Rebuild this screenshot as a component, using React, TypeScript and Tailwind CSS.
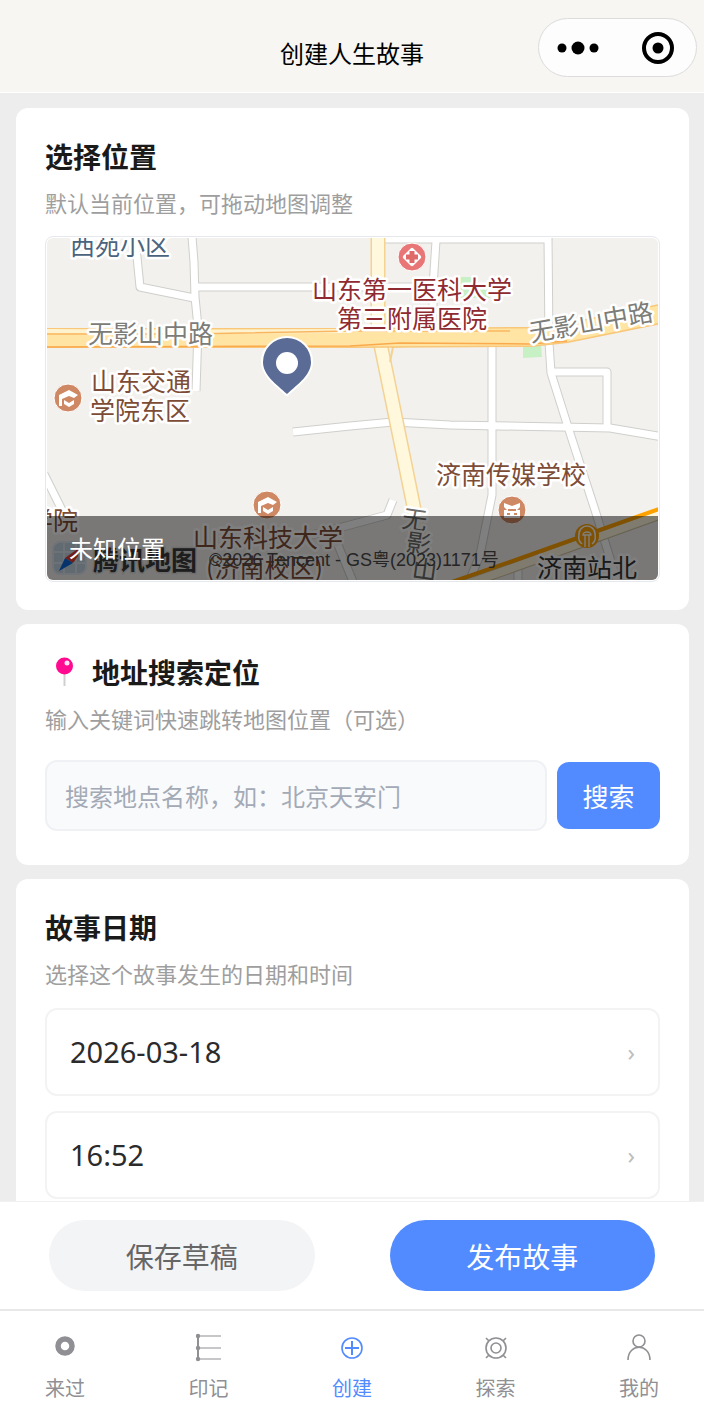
import { useState } from "react"
import type { ReactNode } from "react"

const ROADS = [
  "M134 237 L137 257 L140 287 L194 298",
  "M192 237 L194 262 L195 297 L198 327 L197 360 L196 391",
  "M196 287 L436 287",
  "M385 239 L549 239",
  "M436 241 L433 287 L433 330",
  "M548 237 L549 343 L551 373 L568 427 L595 510 L618 584",
  "M551 372 L607 372 L607 427",
  "M492 345 L492 495 L480 555 L468 584",
  "M293 432 L350 426 L393 422 L450 425 L610 428 L663 437",
  "M44 474 L62 510 L70 525",
  "M300 538 L350 525 L387 515 L393 500",
  "M338 545 L354 584",
  "M518 566 L518 584",
]

const BROWN = "#7d4c36"
const RED = "#8f2a30"

function Label({ x, y, fill, rotate = 0, children }: { x: number; y: number; fill: string; rotate?: number; children: ReactNode }) {
  return (
    <text
      x={x}
      y={y}
      fill={fill}
      fontSize="25"
      stroke="#fff"
      strokeWidth="5"
      strokeLinejoin="round"
      paintOrder="stroke"
      transform={`rotate(${rotate} ${x} ${y})`}
    >
      {children}
    </text>
  )
}

function SchoolPoi({ x, y }: { x: number; y: number }) {
  return (
    <g transform={`translate(${x} ${y})`}>
      <circle r="14" fill="#cf8864" stroke="#fff" strokeWidth="1" />
      <path d="M1 -8 L10 -3 L6 0 L1 -2 L-6 1 V8 H-9 V-3 Z" fill="#fff" />
      <path d="M-4 2 L1 5 L6 2 V6 L1 9 L-4 6 Z" fill="#fff" />
    </g>
  )
}

function MapCanvas() {
  return (
    <svg viewBox="47 238 612 342" preserveAspectRatio="xMinYMin slice" className="block h-full w-full" role="img" aria-label="地图">
      <rect x="40" y="230" width="640" height="370" fill="#f2f1ee" />

      {/* Parks */}
      <path d="M460 277 H476 V287 L490 291 V298 H460 Z M523 347 L541 345 L542 357 L523 358 Z" fill="#c7f0c4" />

      {/* Side streets */}
      <g fill="none" strokeLinejoin="round">
        {ROADS.map(d => <path key={d} d={d} stroke="#cfcfcc" strokeWidth="9" />)}
        {ROADS.map(d => <path key={d} d={d} stroke="#fff" strokeWidth="7" />)}
      </g>

      {/* Main roads */}
      <g fill="none" strokeLinejoin="round">
        <path d="M378 230 V332 L392 400 L413 503 L428 590" stroke="#f4d291" strokeWidth="15" />
        <path d="M378 230 V332 L392 400 L413 503 L428 590" stroke="#fff8dd" strokeWidth="12" />
        <path d="M390 362 L393 347 L430 344" stroke="#f4d291" strokeWidth="2" />
        <path d="M40 338 L350 338 L530 337 L567 333 L670 312" stroke="#f8c77a" strokeWidth="20" />
        <path d="M40 338 L350 338 L530 337 L567 333 L670 312" stroke="#ffe4a3" strokeWidth="17" />
        <path d="M40 331 L160 332 L350 331" stroke="#fff3cf" strokeWidth="4" />
        <path d="M40 334 L190 334 L350 331 L510 331" stroke="#f9b661" strokeWidth="1.5" />
        <path d="M40 347 L350 346 L400 343 L530 344 L567 341" stroke="#faa94c" strokeWidth="1.5" />
      </g>

      {/* Metro line */}
      <g fill="none">
        <path d="M461 586 L512 568 L670 511" stroke="#cfc3a0" strokeWidth="10" />
        <path d="M461 586 L512 568 L670 511" stroke="#fff6dc" strokeWidth="8" />
        <path d="M440 586 L510 562 L670 505" stroke="#ffa200" strokeWidth="4" />
        <circle cx="587" cy="536" r="12" fill="#ffa200" />
        <path d="M582 544 C577 540 579 536 579 534 A8 8 0 0 1 595 534 C595 536 597 540 592 544" stroke="#fff" strokeWidth="1.6" />
        <path d="M585 547 V535 M589 547 V535 M583 535 A4 3 0 0 1 591 535 Z" stroke="#fff" strokeWidth="1.4" />
      </g>

      {/* Points of interest */}
      <SchoolPoi x={68} y={398} />
      <SchoolPoi x={267} y={505} />
      <g transform="translate(512 510)">
        <circle r="14" fill="#cf8864" stroke="#fff" strokeWidth="1" />
        <path d="M-8 -7 L0 -4 L8 -7 V-3 L5 0 H8 V8 H-8 V0 H-5 L-8 -3 Z" fill="#fff" />
        <path d="M-5 4 H-2 M2 4 H5 M-4 0 H4" stroke="#cf8864" strokeWidth="2" />
      </g>
      <g transform="translate(412 257)">
        <circle r="14" fill="#e87676" stroke="#fff" strokeWidth="1" />
        <rect x="-7" y="-7" width="14" height="14" rx="2" transform="rotate(45)" fill="#fff" />
        <path d="M0 -6 V6 M-6 0 H6" stroke="#e06a6a" strokeWidth="5" />
      </g>

      {/* Labels */}
      <Label x={70} y={255} fill="#4b647e">西苑小区</Label>
      <Label x={88} y={343} fill="#7c7c78">无影山中路</Label>
      <Label x={531} y={342} fill="#7c7c78" rotate={-10}>无影山中路</Label>
      <Label x={91} y={391} fill={BROWN}>山东交通</Label>
      <Label x={90} y={420} fill={BROWN}>学院东区</Label>
      <Label x={312} y={299} fill={RED}>山东第一医科大学</Label>
      <Label x={337} y={328} fill={RED}>第三附属医院</Label>
      <Label x={436} y={484} fill={BROWN}>济南传媒学校</Label>
      <Label x={28} y={530} fill={BROWN}>学院</Label>
      <Label x={193} y={547} fill={BROWN}>山东科技大学</Label>
      <Label x={206} y={577} fill={BROWN}>(济南校区)</Label>
      <Label x={401} y={527} fill="#6c6c69" rotate={8}>无</Label>
      <Label x={405} y={551} fill="#6c6c69" rotate={8}>影</Label>
      <Label x={411} y={577} fill="#6c6c69" rotate={8}>山</Label>
      <Label x={537} y={577} fill="#333">济南站北</Label>

      {/* Map provider */}
      <rect x="53" y="542" width="33" height="32" rx="7" fill="#c3d3e2" stroke="#dfe7ee" strokeWidth="2" />
      <path d="M64 542 V574 M76 542 V574 M53 552 H86 M53 563 H86" stroke="#dbe4ec" strokeWidth="2" />
      <path d="M65 558 L79 548 L78 556 L73 563 Z" fill="#e03a2c" />
      <path d="M59 571 L65 558 L73 563 Z" fill="#0a66d8" />
      <text x="93" y="570" fontSize="26" fontWeight="700" fill="#3a3a3a" stroke="#ddd" strokeWidth="3" paintOrder="stroke">腾讯地图</text>
      <text x="209" y="566" fontSize="18" fill="#4a4a4a" className="font-['Liberation_Sans','Noto_Sans_CJK_SC',sans-serif]">©2026 Tencent - GS粤(2023)1171号</text>

      {/* Current position */}
      <path
        d="M287 394 C276 384 263 375 263 362 A24 24 0 0 1 311 362 C311 375 298 384 287 394 Z"
        fill="#5a6c96"
        stroke="#fff"
        strokeWidth="4"
        paintOrder="stroke"
      />
      <circle cx="287" cy="363" r="11" fill="#fff" />
    </svg>
  )
}

function CardHeading({ title, desc, icon }: { title: string; desc: string; icon?: ReactNode }) {
  return (
    <>
      <h2 className="flex items-center gap-2 text-[28px] leading-9 font-bold text-[#1a1a1a]">
        {icon}
        {title}
      </h2>
      <p className="mt-3 text-[22px] leading-8 text-[#9e9e9e]">{desc}</p>
    </>
  )
}

function PickerRow({ value, label }: { value: string; label: string }) {
  return (
    <button
      type="button"
      aria-label={`${label} ${value}`}
      className="flex h-[88px] w-full items-center justify-between rounded-xl border-2 border-[#f3f3f3] bg-white px-[23px] font-['Noto_Sans','Noto_Sans_CJK_SC',sans-serif] text-[29px] text-[#2b2b2b]"
    >
      <span>{value}</span>
      <span className="text-2xl text-[#bdbdbd]">›</span>
    </button>
  )
}

const TABS = [
  {
    label: "来过",
    icon: <circle cx="16" cy="14" r="7" strokeWidth="5.5" />,
  },
  {
    label: "印记",
    icon: (
      <>
        <path d="M5 4 V27" strokeWidth="2" />
        <path d="M5 4 H28 M5 16 H28 M5 27 H28" strokeWidth="1.2" />
        <g fill="currentColor" stroke="none">
          <circle cx="5" cy="4" r="2.2" />
          <circle cx="5" cy="16" r="2.2" />
          <circle cx="5" cy="27" r="2.2" />
        </g>
      </>
    ),
  },
  {
    label: "创建",
    icon: (
      <>
        <circle cx="16" cy="16" r="10" strokeWidth="1.6" />
        <path d="M16 9 V23 M9 16 H23" strokeWidth="2" />
      </>
    ),
  },
  {
    label: "探索",
    icon: (
      <>
        <circle cx="16" cy="16" r="10" strokeWidth="1.6" />
        <circle cx="16" cy="16" r="5" strokeWidth="1.6" />
        <path d="M6 6 L9 9 M26 6 L23 9 M6 26 L9 23 M26 26 L23 23" strokeWidth="1.6" />
      </>
    ),
  },
  {
    label: "我的",
    icon: (
      <>
        <circle cx="16" cy="9" r="6" strokeWidth="1.6" />
        <path d="M5 28 C5 11 27 11 27 28" strokeWidth="1.6" />
      </>
    ),
  },
]

export default function App() {
  const [keyword, setKeyword] = useState("")
  const [active, setActive] = useState("创建")

  return (
    <div className="flex h-screen flex-col overflow-hidden bg-[#ededed] font-['Noto_Sans_CJK_SC',sans-serif]">
      {/* Navigation bar */}
      <header className="grid h-[93px] shrink-0 grid-cols-[1fr_auto_1fr] items-start border-b border-white bg-[#f7f6f2]">
        <h1 className="col-start-2 mt-[37px] text-2xl leading-8 text-black">创建人生故事</h1>
        <div className="mt-[18px] mr-[7px] flex h-[59px] w-[159px] items-center justify-between justify-self-end rounded-full border border-[#dcdcdc] bg-[#fdfdfd] px-[18px]">
          <button type="button" aria-label="更多">
            <svg width="42" height="32" viewBox="0 0 42 32">
              <circle cx="5" cy="16" r="4.5" />
              <circle cx="21" cy="16" r="6.5" />
              <circle cx="37" cy="16" r="4.5" />
            </svg>
          </button>
          <button type="button" aria-label="关闭" className="mr-1">
            <svg width="32" height="32" viewBox="0 0 32 32">
              <circle cx="16" cy="16" r="14" fill="none" stroke="#000" strokeWidth="4" />
              <circle cx="16" cy="16" r="5.5" />
            </svg>
          </button>
        </div>
      </header>

      <main className="flex min-h-0 flex-1 flex-col gap-[14px] overflow-y-auto pt-[15px] pr-[15px] pl-4 [scrollbar-width:none]">
        {/* Location */}
        <section className="shrink-0 rounded-xl bg-white px-[29px] pt-[30px] pb-7">
          <CardHeading title="选择位置" desc="默认当前位置，可拖动地图调整" />
          <div className="mt-[18px] h-[346px] rounded-lg border border-[#e5e9ee] p-px">
            <div className="relative h-full overflow-hidden rounded-md">
              <MapCanvas />
              <div className="absolute inset-x-0 bottom-0 flex h-16 items-center bg-black/50 px-[22px] text-2xl text-white">
                未知位置
              </div>
            </div>
          </div>
        </section>

        {/* Address search */}
        <section className="shrink-0 rounded-xl bg-white px-[29px] pt-[30px] pb-[34px]">
          <CardHeading
            title="地址搜索定位"
            desc="输入关键词快速跳转地图位置（可选）"
            icon={
              <svg width="39" height="32" viewBox="0 0 39 32">
                <path d="M19.5 16 V30" stroke="#d0d0d0" strokeWidth="2" />
                <circle cx="19.5" cy="10" r="8.5" fill="#ff0a91" />
                <circle cx="22" cy="7" r="2.5" fill="#ffe1f2" />
              </svg>
            }
          />
          <div className="mt-[26px] flex items-center gap-[10px]">
            <input
              type="text"
              aria-label="搜索地点名称"
              value={keyword}
              onChange={e => setKeyword(e.target.value)}
              placeholder="搜索地点名称，如：北京天安门"
              className="h-[71px] min-w-0 flex-1 rounded-xl border-2 border-[#eff1f4] bg-[#f9fafc] px-[18px] text-2xl text-[#2b2b2b] outline-none placeholder:text-[#a3aab6]"
            />
            <button type="button" className="h-[67px] w-[103px] rounded-xl bg-[#528bff] text-[26px] text-white">
              搜索
            </button>
          </div>
        </section>

        {/* Story date */}
        <section className="shrink-0 rounded-xl bg-white px-[29px] pt-[30px] pb-7">
          <CardHeading title="故事日期" desc="选择这个故事发生的日期和时间" />
          <div className="mt-[19px] flex flex-col gap-[15px]">
            <PickerRow label="日期" value="2026-03-18" />
            <PickerRow label="时间" value="16:52" />
          </div>
        </section>
      </main>

      {/* Actions */}
      <div className="flex h-[108px] shrink-0 items-center gap-[75px] border-t border-[#f0f0f0] bg-white px-[49px] text-[28px]">
        <button type="button" className="h-[71px] flex-1 rounded-full bg-[#f3f4f6] text-[#666]">保存草稿</button>
        <button type="button" className="h-[71px] flex-1 rounded-full bg-[#528bff] text-white">发布故事</button>
      </div>

      {/* Tab bar */}
      <nav className="flex h-[112px] shrink-0 items-start justify-between border-t-2 border-[#e8e8e8] bg-white px-[45px] pt-[21px]">
        {TABS.map(tab => (
          <button
            key={tab.label}
            type="button"
            onClick={() => setActive(tab.label)}
            className={`flex flex-col items-center gap-2 text-xl leading-8 ${tab.label === active ? "text-[#528bff]" : "text-[#8f8f94]"}`}
          >
            <svg width="32" height="32" viewBox="0 0 32 32" fill="none" stroke="currentColor">
              {tab.icon}
            </svg>
            {tab.label}
          </button>
        ))}
      </nav>
    </div>
  )
}
